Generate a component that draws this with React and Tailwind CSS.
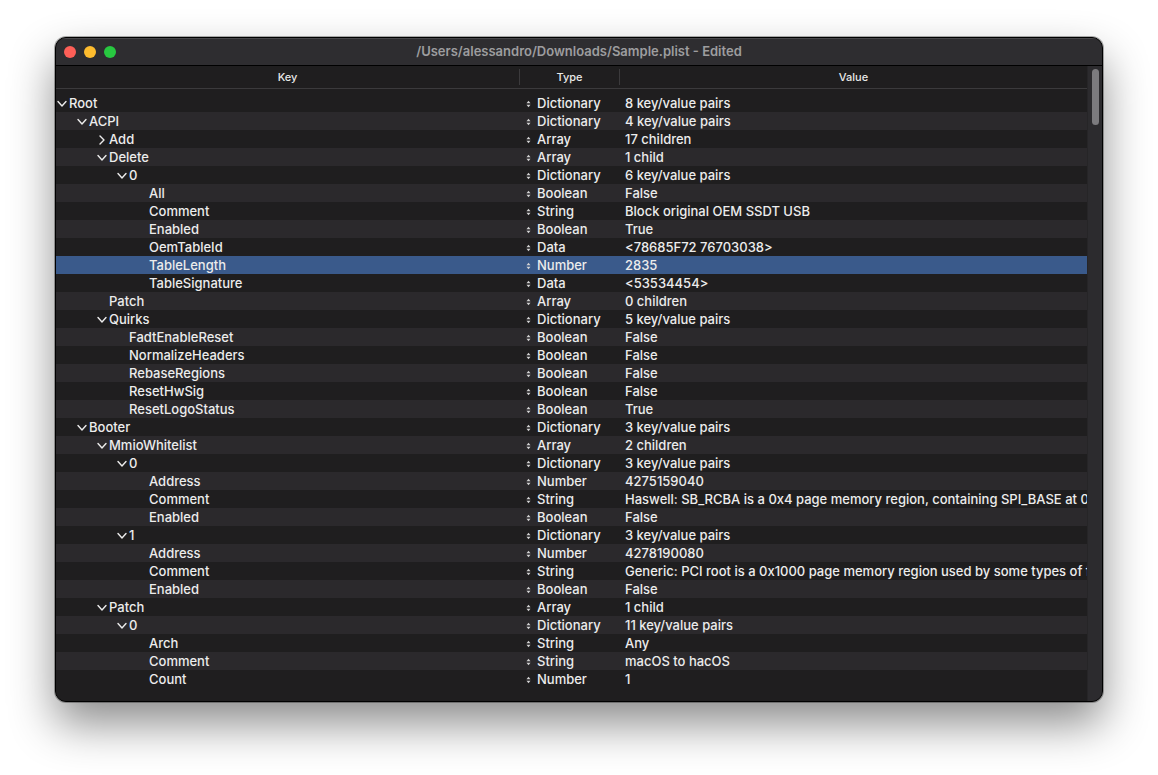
import React from "react";

const rows = [
  { k: "Root", l: 0, c: "open", t: "Dictionary", v: "8 key/value pairs" },
  { k: "ACPI", l: 1, c: "open", t: "Dictionary", v: "4 key/value pairs" },
  { k: "Add", l: 2, c: "closed", t: "Array", v: "17 children" },
  { k: "Delete", l: 2, c: "open", t: "Array", v: "1 child" },
  { k: "0", l: 3, c: "open", t: "Dictionary", v: "6 key/value pairs" },
  { k: "All", l: 4, t: "Boolean", v: "False" },
  { k: "Comment", l: 4, t: "String", v: "Block original OEM SSDT USB" },
  { k: "Enabled", l: 4, t: "Boolean", v: "True" },
  { k: "OemTableId", l: 4, t: "Data", v: "<78685F72 76703038>" },
  { k: "TableLength", l: 4, t: "Number", v: "2835", sel: true },
  { k: "TableSignature", l: 4, t: "Data", v: "<53534454>" },
  { k: "Patch", l: 2, t: "Array", v: "0 children" },
  { k: "Quirks", l: 2, c: "open", t: "Dictionary", v: "5 key/value pairs" },
  { k: "FadtEnableReset", l: 3, t: "Boolean", v: "False" },
  { k: "NormalizeHeaders", l: 3, t: "Boolean", v: "False" },
  { k: "RebaseRegions", l: 3, t: "Boolean", v: "False" },
  { k: "ResetHwSig", l: 3, t: "Boolean", v: "False" },
  { k: "ResetLogoStatus", l: 3, t: "Boolean", v: "True" },
  { k: "Booter", l: 1, c: "open", t: "Dictionary", v: "3 key/value pairs" },
  { k: "MmioWhitelist", l: 2, c: "open", t: "Array", v: "2 children" },
  { k: "0", l: 3, c: "open", t: "Dictionary", v: "3 key/value pairs" },
  { k: "Address", l: 4, t: "Number", v: "4275159040" },
  { k: "Comment", l: 4, t: "String", v: "Haswell: SB_RCBA is a 0x4 page memory region, containing SPI_BASE at 0x3800 (SPI_BASE_ADDRESS)" },
  { k: "Enabled", l: 4, t: "Boolean", v: "False" },
  { k: "1", l: 3, c: "open", t: "Dictionary", v: "3 key/value pairs" },
  { k: "Address", l: 4, t: "Number", v: "4278190080" },
  { k: "Comment", l: 4, t: "String", v: "Generic: PCI root is a 0x1000 page memory region used by some types of firmware" },
  { k: "Enabled", l: 4, t: "Boolean", v: "False" },
  { k: "Patch", l: 2, c: "open", t: "Array", v: "1 child" },
  { k: "0", l: 3, c: "open", t: "Dictionary", v: "11 key/value pairs" },
  { k: "Arch", l: 4, t: "String", v: "Any" },
  { k: "Comment", l: 4, t: "String", v: "macOS to hacOS" },
  { k: "Count", l: 4, t: "Number", v: "1" },
];

const indents = ["pl-[1px]", "pl-[21px]", "pl-[41px]", "pl-[61px]", "pl-[81px]"];

function Chevron({ open }) {
  return (
    <svg width="12" height="12" viewBox="0 0 12 12" className="shrink-0">
      {open ? (
        <polyline points="1,3.5 5,8 9,3.5" fill="none" stroke="#ececec" strokeWidth="1.4" strokeLinecap="round" strokeLinejoin="round" />
      ) : (
        <polyline points="3,2 7,6 3,10" fill="none" stroke="#ececec" strokeWidth="1.4" strokeLinecap="round" strokeLinejoin="round" />
      )}
    </svg>
  );
}

function Stepper() {
  return (
    <svg width="5" height="8" viewBox="0 0 5 8" className="shrink-0">
      <polygon points="0.5,3.3 2.5,0.8 4.5,3.3" fill="#d4d4d4" />
      <polygon points="0.5,4.7 2.5,7.2 4.5,4.7" fill="#d4d4d4" />
    </svg>
  );
}

function Row({ r, i }) {
  const bg = r.sel ? "bg-[#3a5a8b]" : i % 2 === 0 ? "bg-[#1f1e1f]" : "bg-[#2b292c]";
  return (
    <div className={`grid grid-cols-[464px_100px_1fr] h-[18px] items-center text-[13px] font-medium text-[#ececec] ${bg}`}>
      <div className={`flex items-center ${indents[r.l]}`}>
        {r.c ? <Chevron open={r.c === "open"} /> : <span className="w-[12px] shrink-0" />}
        <span className="whitespace-nowrap">{r.k}</span>
      </div>
      <div className="flex items-center gap-[6px] pl-[6px]">
        <Stepper />
        <span>{r.t}</span>
      </div>
      <div className="pl-[5px] overflow-hidden whitespace-nowrap">{r.v}</div>
    </div>
  );
}

export default function App() {
  return (
    <div className="min-h-screen bg-white pl-[55px] pt-[37px]" style={{ fontFamily: "Inter, 'Liberation Sans', sans-serif" }}>
      <div className="w-[1048px] h-[665px] rounded-[11px] border border-black bg-[#1f1e1f] overflow-hidden shadow-[0_22px_45px_rgba(0,0,0,0.45),0_0_0_1px_rgba(0,0,0,0.3)] flex flex-col">
        {/* title bar */}
        <div className="h-[28px] shrink-0 bg-[#2e2d30] border-b border-black flex items-center relative shadow-[inset_0_1px_0_rgba(255,255,255,0.12)]">
          <div className="flex items-center gap-[8px] pl-[8px]">
            <span className="w-[12px] h-[12px] rounded-full bg-[#fe5f57]" />
            <span className="w-[12px] h-[12px] rounded-full bg-[#febc2e]" />
            <span className="w-[12px] h-[12px] rounded-full bg-[#28c840]" />
          </div>
          <div className="absolute inset-0 flex items-center justify-center text-[13px] font-semibold text-[#9d9d9f]">
            /Users/alessandro/Downloads/Sample.plist - Edited
          </div>
        </div>
        <div className="flex flex-1 min-h-0">
          <div className="flex-1 flex flex-col min-w-0">
            {/* header */}
            <div className="h-[23px] shrink-0 grid grid-cols-[464px_100px_1fr] items-center border-b border-[#3b3a3c] text-[11px] font-medium text-[#e8e8e8] bg-[#1f1e1f]">
              <div className="text-center border-r border-[#3b3a3c] h-[16px] leading-[16px]">Key</div>
              <div className="text-center border-r border-[#3b3a3c] h-[16px] leading-[16px]">Type</div>
              <div className="text-center h-[16px] leading-[16px]">Value</div>
            </div>
            <div className="pt-[5px] flex-1 bg-[#1f1e1f]">
              {rows.map((r, i) => (
                <Row key={i} r={r} i={i} />
              ))}
            </div>
          </div>
          {/* scrollbar */}
          <div className="w-[15px] shrink-0 bg-[#2c2b2e] border-l border-[#262527] pt-[3px] flex justify-center">
            <div className="w-[7px] h-[56px] rounded-full bg-[#7c7b7e]" />
          </div>
        </div>
      </div>
    </div>
  );
}
